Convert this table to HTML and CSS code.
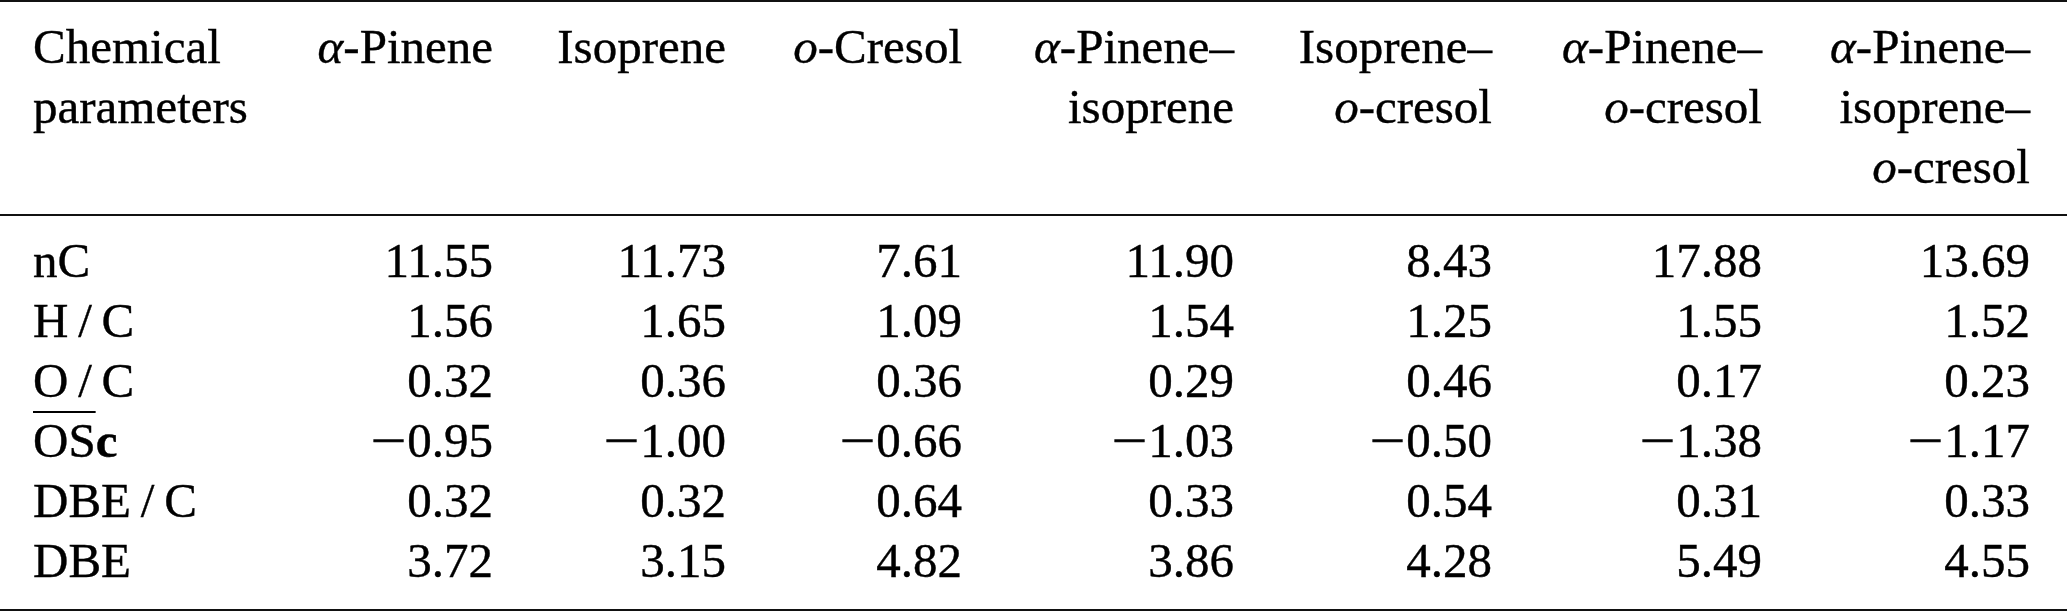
FILE: index.html
```html
<!DOCTYPE html>
<html lang="en">

<head>
    <meta charset="UTF-8">
    <title>Chemical parameters</title>
    <link rel="stylesheet" href="styles.css">
</head>

<body>
    <table class="params">
        <colgroup>
            <col class="c-name">
            <col class="c-ap">
            <col class="c-is">
            <col class="c-oc">
            <col class="c-ap-is">
            <col class="c-is-oc">
            <col class="c-ap-oc">
            <col class="c-all">
        </colgroup>
        <thead>
            <tr>
                <th class="name">Chemical<br>parameters</th>
                <th><i>α</i>-Pinene</th>
                <th>Isoprene</th>
                <th><i>o</i>-Cresol</th>
                <th><i>α</i>-Pinene–<br>isoprene</th>
                <th>Isoprene–<br><i>o</i>-cresol</th>
                <th><i>α</i>-Pinene–<br><i>o</i>-cresol</th>
                <th class="last"><i>α</i>-Pinene–<br>isoprene–<br><i>o</i>-cresol</th>
            </tr>
        </thead>
        <tbody>
            <tr class="first">
                <td class="name">nC</td>
                <td>11.55</td>
                <td>11.73</td>
                <td>7.61</td>
                <td>11.90</td>
                <td>8.43</td>
                <td>17.88</td>
                <td class="last">13.69</td>
            </tr>
            <tr>
                <td class="name">H&thinsp;/&thinsp;C</td>
                <td>1.56</td>
                <td>1.65</td>
                <td>1.09</td>
                <td>1.54</td>
                <td>1.25</td>
                <td>1.55</td>
                <td class="last">1.52</td>
            </tr>
            <tr>
                <td class="name">O&thinsp;/&thinsp;C</td>
                <td>0.32</td>
                <td>0.36</td>
                <td>0.36</td>
                <td>0.29</td>
                <td>0.46</td>
                <td>0.17</td>
                <td class="last">0.23</td>
            </tr>
            <tr>
                <td class="name"><span class="bar">OS</span><b>c</b></td>
                <td><span class="neg">−</span>0.95</td>
                <td><span class="neg">−</span>1.00</td>
                <td><span class="neg">−</span>0.66</td>
                <td><span class="neg">−</span>1.03</td>
                <td><span class="neg">−</span>0.50</td>
                <td><span class="neg">−</span>1.38</td>
                <td class="last"><span class="neg">−</span>1.17</td>
            </tr>
            <tr>
                <td class="name">DBE&thinsp;/&thinsp;C</td>
                <td>0.32</td>
                <td>0.32</td>
                <td>0.64</td>
                <td>0.33</td>
                <td>0.54</td>
                <td>0.31</td>
                <td class="last">0.33</td>
            </tr>
            <tr class="end">
                <td class="name">DBE</td>
                <td>3.72</td>
                <td>3.15</td>
                <td>4.82</td>
                <td>3.86</td>
                <td>4.28</td>
                <td>5.49</td>
                <td class="last">4.55</td>
            </tr>
        </tbody>
    </table>
</body>

</html>
```

FILE: styles.css
```css
:root {
    --ink: #000;
    --rule: #111;
}

* {
    box-sizing: border-box;
    margin: 0;
    padding: 0;
}

html,
body {
    background: #fff;
    color: var(--ink);
}

body {
    font-family: 'Liberation Serif', 'Times New Roman', serif;
    font-size: 49px;
    line-height: 60px;
    -webkit-text-stroke: 0.4px currentColor;
}

.params {
    width: 100%;
    table-layout: fixed;
    border-collapse: separate;
    border-spacing: 0;
}

.c-name { width: 260px; }
.c-ap { width: 233px; }
.c-is { width: 233px; }
.c-oc { width: 236px; }
.c-ap-is { width: 272px; }
.c-is-oc { width: 258px; }
.c-ap-oc { width: 270px; }
.c-all { width: 305px; }

th,
td {
    text-align: right;
    font-weight: normal;
    white-space: nowrap;
    vertical-align: top;
}

th {
    border-top: 2px solid var(--rule);
    border-bottom: 2px solid var(--rule);
    padding-top: 15px;
    padding-bottom: 17px;
}

.name {
    text-align: left;
    padding-left: 33px;
}

.last {
    padding-right: 37px;
}

tr.first td {
    padding-top: 15px;
}

tr.end td {
    padding-bottom: 18px;
    border-bottom: 2px solid var(--rule);
}

.bar {
    text-decoration: overline;
    text-decoration-thickness: 2px;
}

.neg {
    display: inline-block;
    margin: 0 5px;
    transform: scaleX(1.3);
}
```
